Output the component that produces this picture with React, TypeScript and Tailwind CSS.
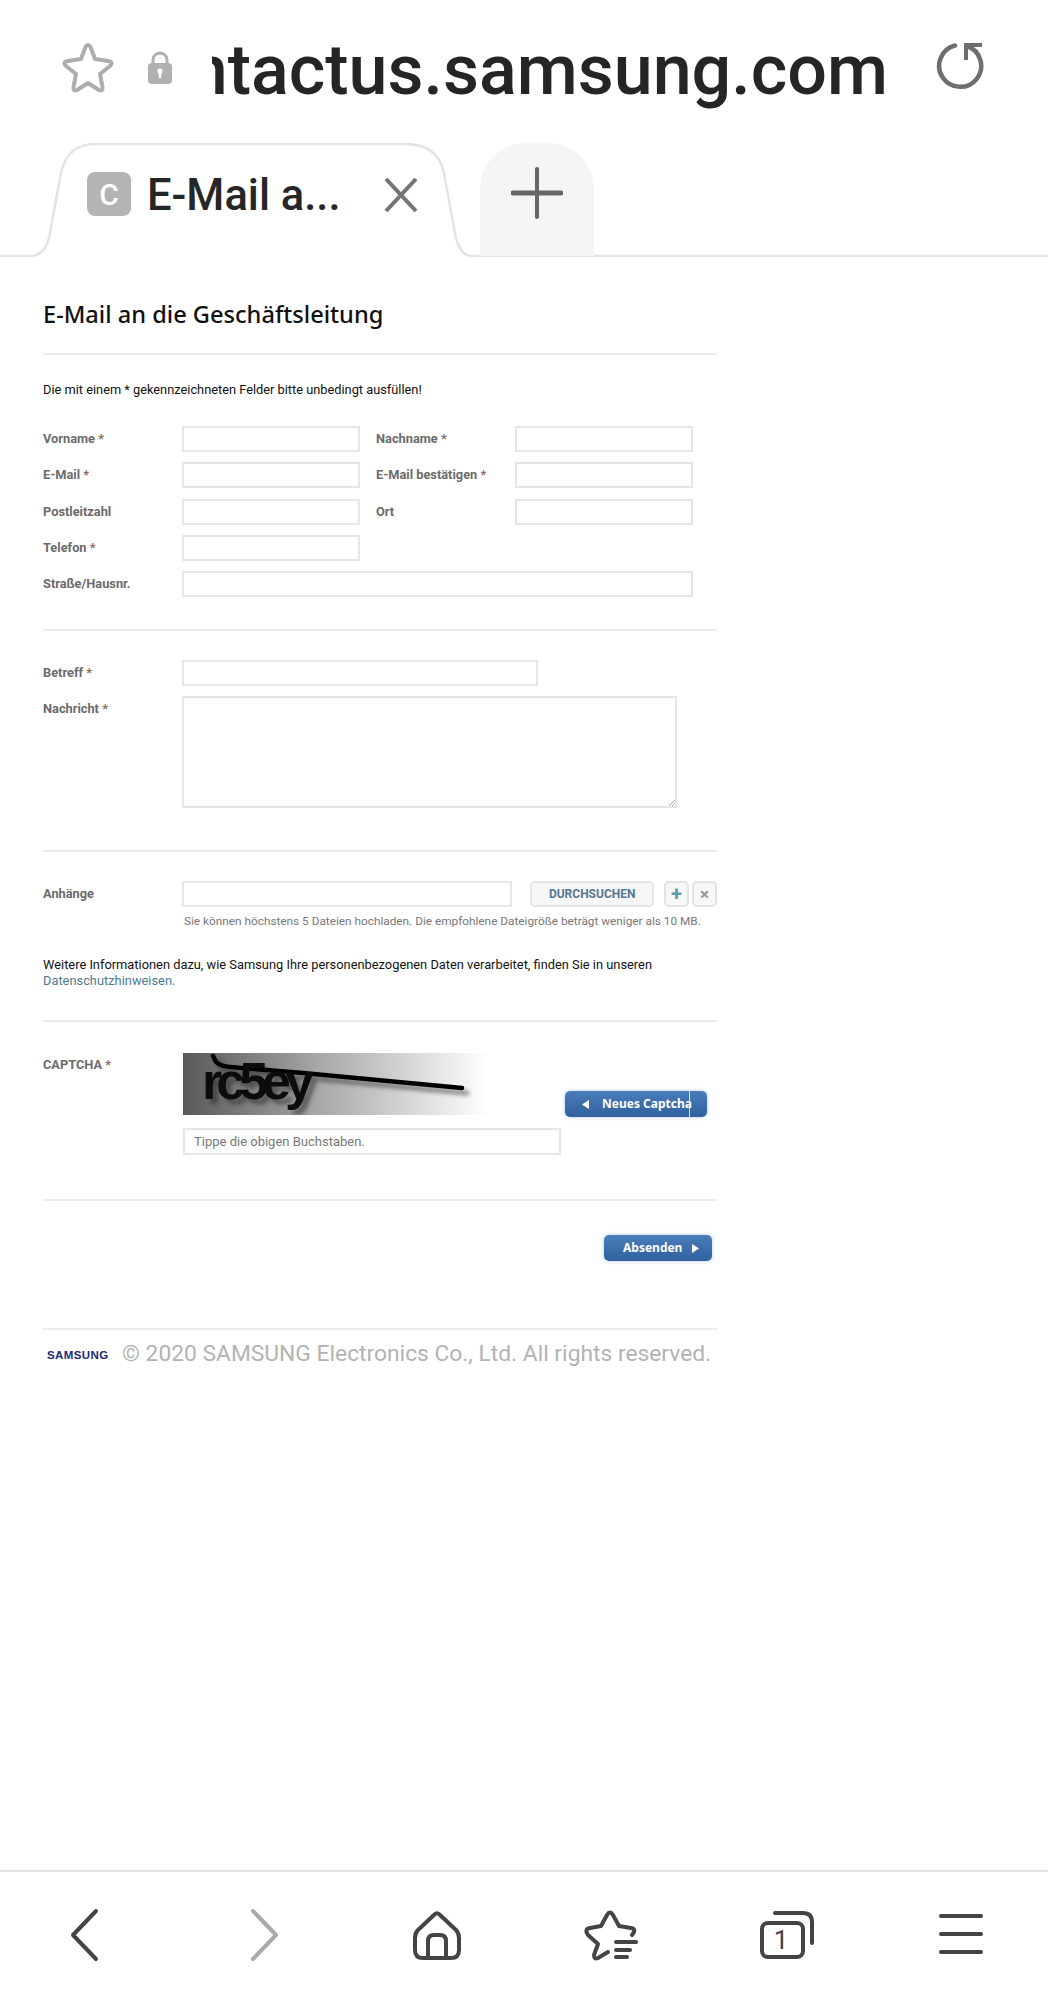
import type { ReactNode } from "react";

const roboto = { fontFamily: "Roboto, sans-serif" };

function Req() {
  return <span className="text-[#8a6a66]"> *</span>;
}

function Label({ children, className = "" }: { children: ReactNode; className?: string }) {
  return <div className={`text-[12.8px] font-bold text-[#6b6b6b] leading-[26px] ${className}`}>{children}</div>;
}

function Box({ className = "" }: { className?: string }) {
  return <div className={`h-[26px] bg-white border-2 border-[#e6e6e6] ${className}`} />;
}

function Rule() {
  return <div className="h-[2px] bg-[#ececec]" />;
}

function BlueButton({ children, className = "" }: { children: ReactNode; className?: string }) {
  return (
    <div className={`h-[26px] rounded-[5px] bg-gradient-to-b from-[#4c7dbb] to-[#30619f] shadow-[0_0_4px_rgba(120,170,220,0.6)] text-white text-[12px] font-bold flex items-center ${className}`} style={{ fontFamily: "'Noto Sans', sans-serif" }}>
      {children}
    </div>
  );
}

function Captcha() {
  return (
    <svg width="305" height="62" viewBox="0 0 305 62" className="block">
      <defs>
        <linearGradient id="cap" x1="0" x2="1" y1="0" y2="0">
          <stop offset="0" stopColor="#585858" />
          <stop offset="0.45" stopColor="#a8a8a8" />
          <stop offset="0.85" stopColor="#e8e8e8" />
          <stop offset="1" stopColor="#fff" />
        </linearGradient>
      </defs>
      <rect width="305" height="62" fill="url(#cap)" />
      <g className="drop-shadow-[5px_5px_2px_rgba(40,40,40,0.55)]">
        <path d="M30 3 L33 9 Q37 13 47 14 L120 20 L279 35" fill="none" stroke="#000" strokeWidth="4.5" strokeLinecap="round" />
        <text x="19" y="46" fontFamily="'Liberation Sans', sans-serif" fontWeight="700" fontSize="52" fill="#0c0c0c" letterSpacing="-6">rc5ey</text>
      </g>
    </svg>
  );
}

function TopBar() {
  return (
    <div className="h-[143px] flex items-start pl-[61px]">
      <svg width="54" height="52" viewBox="0 0 54 52" className="mt-[42px] shrink-0" fill="none" stroke="#adadad" strokeWidth="4" strokeLinejoin="round">
        <path d="M24.5 5 Q27 1 29.5 5 L34 17 L47 19 Q53 20 49 24 L39 32 L41.5 45 Q42 50 38 48 L27 41 L16 48 Q12 50 12.5 45 L15 32 L5 24 Q1 20 7 19 L20 17 Z" />
      </svg>
      <svg width="26" height="33" viewBox="0 0 26 33" className="mt-[51px] ml-[32px] shrink-0">
        <path d="M6 14 V9 a7 7 0 0 1 14 0 V14" fill="none" stroke="#b0b0b0" strokeWidth="3" />
        <rect x="1" y="12" width="24" height="21" rx="4" fill="#b0b0b0" />
        <circle cx="13" cy="20" r="2.6" fill="#fff" />
        <rect x="11.8" y="20" width="2.4" height="7" fill="#fff" />
      </svg>
      <div className="ml-[39px] w-[676px] h-[100px] mt-[26px] overflow-hidden flex justify-end shrink-0">
        <div className="text-[70px] font-medium leading-[88px] text-[#252525] whitespace-nowrap" style={roboto}>
          ntactus.samsung.com
        </div>
      </div>
      <svg width="50" height="50" viewBox="0 0 50 50" className="mt-[42px] ml-[48px] shrink-0" fill="none" stroke="#6e6e6e" strokeWidth="4.5" strokeLinecap="round">
        <path d="M19 3.5 A21 21 0 1 0 31 4" />
        <path d="M46 3 H30 V18" strokeLinecap="butt" strokeWidth="4" />
      </svg>
    </div>
  );
}

function TabBar() {
  return (
    <div className="h-[114px] relative flex items-stretch">
      <svg width="1048" height="114" viewBox="0 0 1048 114" className="absolute left-0 top-0" fill="none" stroke="#e4e4e4" strokeWidth="2.5">
        <path d="M0 113 H33 Q47 110 50 90 L60 35 Q65 1 95 1 H405 Q438 1 444 30 L454 85 Q458 113 472 113 H1048" />
      </svg>
      <div className="relative ml-[87px] mt-[29px] flex items-start h-[44px]">
        <div className="w-[44px] h-[44px] rounded-[8px] bg-[#b4b4b4] text-white text-[30px] font-medium flex items-center justify-center" style={roboto}>C</div>
        <div className="ml-[16px] mt-[2px] text-[43.5px] font-medium leading-[44px] text-[#262626] w-[237px] whitespace-nowrap" style={roboto}>E-Mail a...</div>
        <svg width="34" height="34" viewBox="0 0 34 34" className="mt-[6px] shrink-0" stroke="#757575" strokeWidth="4">
          <path d="M2 1 L32 33 M32 1 L2 33" />
        </svg>
      </div>
      <div className="relative ml-[62px] w-[114px] h-[113px] rounded-t-[46px] bg-[#f5f5f5] flex items-center justify-center pb-[13px]">
        <svg width="52" height="52" viewBox="0 0 52 52" stroke="#666" strokeLinecap="round">
          <path d="M2 26 H50" strokeWidth="5" />
          <path d="M26 2 V50" strokeWidth="4" />
        </svg>
      </div>
    </div>
  );
}

function BottomNav() {
  return (
    <div className="h-[130px] border-t-2 border-[#e6e6e6] shrink-0">
      <svg width="1048" height="128" viewBox="0 0 1048 128" fill="none" stroke="#444" strokeWidth="4" strokeLinecap="round" strokeLinejoin="round">
        <path d="M96 39 L73 63 L96 87" />
        <path d="M253 39 L276 63 L253 87" stroke="#aaa" />
        <path d="M434.5 42.5 Q437 40 439.5 42.5 L456 58 Q459 61 459 66 V78 Q459 86 451 86 H423 Q415 86 415 78 V66 Q415 61 418 58 Z" />
        <path d="M428 86 V69 Q428 63 434 63 H440 Q446 63 446 69 V86" />
        <path d="M632 63 Q637 57 631 56 L619 54 L613 43 Q610 38 607 43 L601 54 L590 56 Q584 57 588 63 L598 72 L594 83 Q594 88 598 86 L608 80" />
        <path d="M616 70 H636 M616 78 H630 M616 85 H627" />
        <rect x="762" y="51" width="41" height="34" rx="6" />
        <path d="M775 41 H803 Q812 41 812 50 V71" />
        <path d="M941 44 H981 M941 62 H981 M941 80 H981" />
        <text x="781" y="77" textAnchor="middle" fontFamily="Roboto, sans-serif" fontSize="26" fill="#444" stroke="none">1</text>
      </svg>
    </div>
  );
}

export default function App() {
  return (
    <div className="w-[1048px] h-[2000px] bg-white flex flex-col overflow-hidden" style={roboto}>
      <TopBar />
      <TabBar />
      <div className="flex-1 w-[674px] ml-[43px] flex flex-col">
        <h1 className="mt-[43px] text-[23.6px] leading-[28px] font-medium text-[#111]" style={{ fontFamily: "'Noto Sans', sans-serif" }}>E-Mail an die Geschäftsleitung</h1>
        <div className="mt-[25px]"><Rule /></div>
        <p className="mt-[27px] text-[12.8px] leading-[16px] text-[#111]">Die mit einem * gekennzeichneten Felder bitte unbedingt ausfüllen!</p>
        <div className="mt-[28px] flex flex-col gap-[10.25px]">
          <div className="flex">
            <Label className="w-[139px]">Vorname<Req /></Label><Box className="w-[178px]" />
            <Label className="w-[139px] ml-[16px]">Nachname<Req /></Label><Box className="w-[178px]" />
          </div>
          <div className="flex">
            <Label className="w-[139px]">E-Mail<Req /></Label><Box className="w-[178px]" />
            <Label className="w-[139px] ml-[16px]">E-Mail bestätigen<Req /></Label><Box className="w-[178px]" />
          </div>
          <div className="flex">
            <Label className="w-[139px]">Postleitzahl</Label><Box className="w-[178px]" />
            <Label className="w-[139px] ml-[16px]">Ort</Label><Box className="w-[178px]" />
          </div>
          <div className="flex">
            <Label className="w-[139px]">Telefon<Req /></Label><Box className="w-[178px]" />
          </div>
          <div className="flex">
            <Label className="w-[139px]">Straße/Hausnr.</Label><Box className="w-[511px]" />
          </div>
        </div>
        <div className="mt-[32px]"><Rule /></div>
        <div className="mt-[29px] flex">
          <Label className="w-[139px]">Betreff<Req /></Label><Box className="w-[356px]" />
        </div>
        <div className="mt-[10px] flex">
          <Label className="w-[139px]">Nachricht<Req /></Label>
          <div className="relative w-[495px] h-[112px] border-2 border-[#e6e6e6]">
            <svg width="6" height="6" viewBox="0 0 6 6" className="absolute right-0 bottom-0" stroke="#aaa">
              <path d="M0 6 L6 0 M3 6 L6 3" />
            </svg>
          </div>
        </div>
        <div className="mt-[42px]"><Rule /></div>
        <div className="mt-[29px] flex items-start">
          <Label className="w-[139px]">Anhänge</Label>
          <Box className="w-[331px]" />
          <div className="ml-[18px] w-[124px] h-[26px] rounded-[5px] border-2 border-[#e6e6e6] bg-[#f7f7f7] text-[#557893] text-[12px] font-bold flex items-center justify-center">DURCHSUCHEN</div>
          <div className="ml-[10px] w-[25px] h-[26px] rounded-[5px] border-2 border-[#e2e2e2] bg-[#f7f7f7] text-[#5f9ab5] text-[20px] font-bold leading-none flex items-center justify-center">+</div>
          <div className="ml-[3px] w-[25px] h-[26px] rounded-[5px] border-2 border-[#e2e2e2] bg-[#f7f7f7] text-[#999] text-[17px] font-bold leading-none flex items-center justify-center">×</div>
        </div>
        <p className="mt-[6px] ml-[141px] text-[11.8px] leading-[16px] text-[#777] whitespace-nowrap">Sie können höchstens 5 Dateien hochladen. Die empfohlene Dateigröße beträgt weniger als 10 MB.</p>
        <p className="mt-[28px] text-[12.85px] leading-[16px] text-[#111] whitespace-nowrap">Weitere Informationen dazu, wie Samsung Ihre personenbezogenen Daten verarbeitet, finden Sie in unseren</p>
        <p className="text-[12.85px] leading-[16px] text-[#4f7a8f]">Datenschutzhinweisen.</p>
        <div className="mt-[31px]"><Rule /></div>
        <div className="mt-[31px] flex items-start">
          <Label className="w-[140px] !leading-[24px]">CAPTCHA <Req /></Label>
          <div className="flex flex-col">
            <div className="flex items-end">
              <Captcha />
              <BlueButton className="ml-[77px] mb-[-2px] w-[142px] relative">
                <svg width="7" height="9" viewBox="0 0 7 9" className="ml-[17px] mr-[13px]" fill="#fff"><path d="M7 0 V9 L0 4.5 Z" /></svg>
                <span>Neues Captcha</span>
                <span className="absolute left-[124px] top-0 w-[1px] h-full bg-[#dbe6f2]" />
              </BlueButton>
            </div>
            <div className="mt-[13px] w-[378px] h-[27px] border-2 border-[#e6e6e6] text-[13px] text-[#777] leading-[23px] pl-[9px]">Tippe die obigen Buchstaben.</div>
          </div>
        </div>
        <div className="mt-[44px]"><Rule /></div>
        <div className="mt-[34px] flex justify-end pr-[5px]">
          <BlueButton className="w-[108px] pl-[19px]">
            <span>Absenden</span>
            <svg width="7" height="9" viewBox="0 0 7 9" className="ml-[10px]" fill="#fff"><path d="M0 0 V9 L7 4.5 Z" /></svg>
          </BlueButton>
        </div>
        <div className="mt-[67px]"><Rule /></div>
        <div className="mt-[8px] flex items-center pl-[4px] whitespace-nowrap">
          <span className="w-[62px] text-[11.5px] font-bold tracking-[0.4px] text-[#1b2a78] leading-none mt-[3px]" style={{ fontFamily: "'Liberation Sans', sans-serif" }}>SAMSUNG</span>
          <span className="ml-[13px] text-[22.8px] leading-[32px] text-[#b3b3b3]">© 2020 SAMSUNG Electronics Co., Ltd. All rights reserved.</span>
        </div>
      </div>
      <BottomNav />
    </div>
  );
}
